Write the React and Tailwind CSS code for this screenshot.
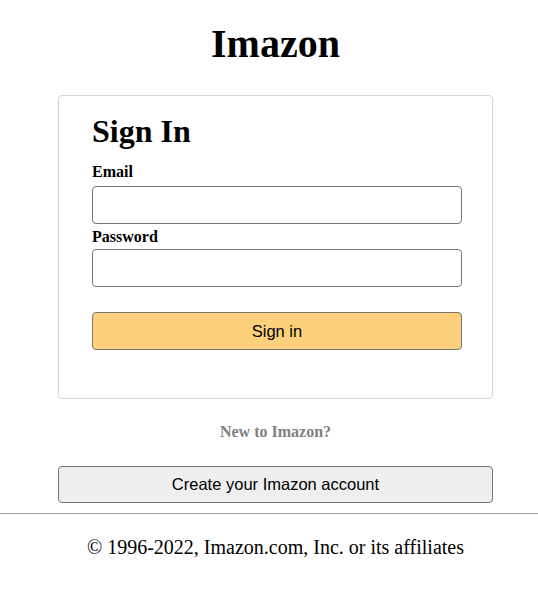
export default function App() {
  return (
    <div className="min-h-screen w-full overflow-hidden bg-white font-['Liberation_Serif',serif] text-black">
      <div className="w-[551px]">
        <h1 className="pt-[22px] text-center text-[40px] font-bold leading-[44px]">Imazon</h1>

        <div className="mx-auto mt-[29px] w-[435px] rounded-[4px] border border-[#d5d5d5] pb-[48px] pl-[33px] pr-[30px] pt-[17px]">
          <h2 className="text-[32px] font-bold leading-[37px]">Sign In</h2>
          <form className="mt-[13px] flex flex-col">
            <label className="text-[16px] font-bold leading-[18px]">Email</label>
            <input
              type="email"
              className="mt-[5px] h-[38px] w-full rounded-[4px] border border-[#767676] bg-white px-2"
            />
            <label className="mt-[4px] text-[16px] font-bold leading-[18px]">Password</label>
            <input
              type="password"
              className="mt-[3px] h-[38px] w-full rounded-[4px] border border-[#767676] bg-white px-2"
            />
            <button
              type="button"
              className="mt-[25px] h-[38px] w-full rounded-[4px] border border-[#767676] bg-[#fdd07b] font-['Liberation_Sans',Arial,sans-serif] text-[16.5px]"
            >
              Sign in
            </button>
          </form>
        </div>

        <p className="mt-[23px] text-center text-[16px] font-bold leading-[20px] text-[#808080]">New to Imazon?</p>

        <div className="mx-auto mt-[24px] w-[435px]">
          <button
            type="button"
            className="h-[37px] w-full rounded-[4px] border border-[#767676] bg-[#efefef] font-['Liberation_Sans',Arial,sans-serif] text-[16.5px]"
          >
            Create your Imazon account
          </button>
        </div>
      </div>

      <hr className="mt-[10px] border-t border-[#a0a0a0]" />

      <p className="w-[551px] pt-[21px] text-center text-[20px] leading-[24px]">
        © 1996-2022, Imazon.com, Inc. or its affiliates
      </p>
    </div>
  );
}
